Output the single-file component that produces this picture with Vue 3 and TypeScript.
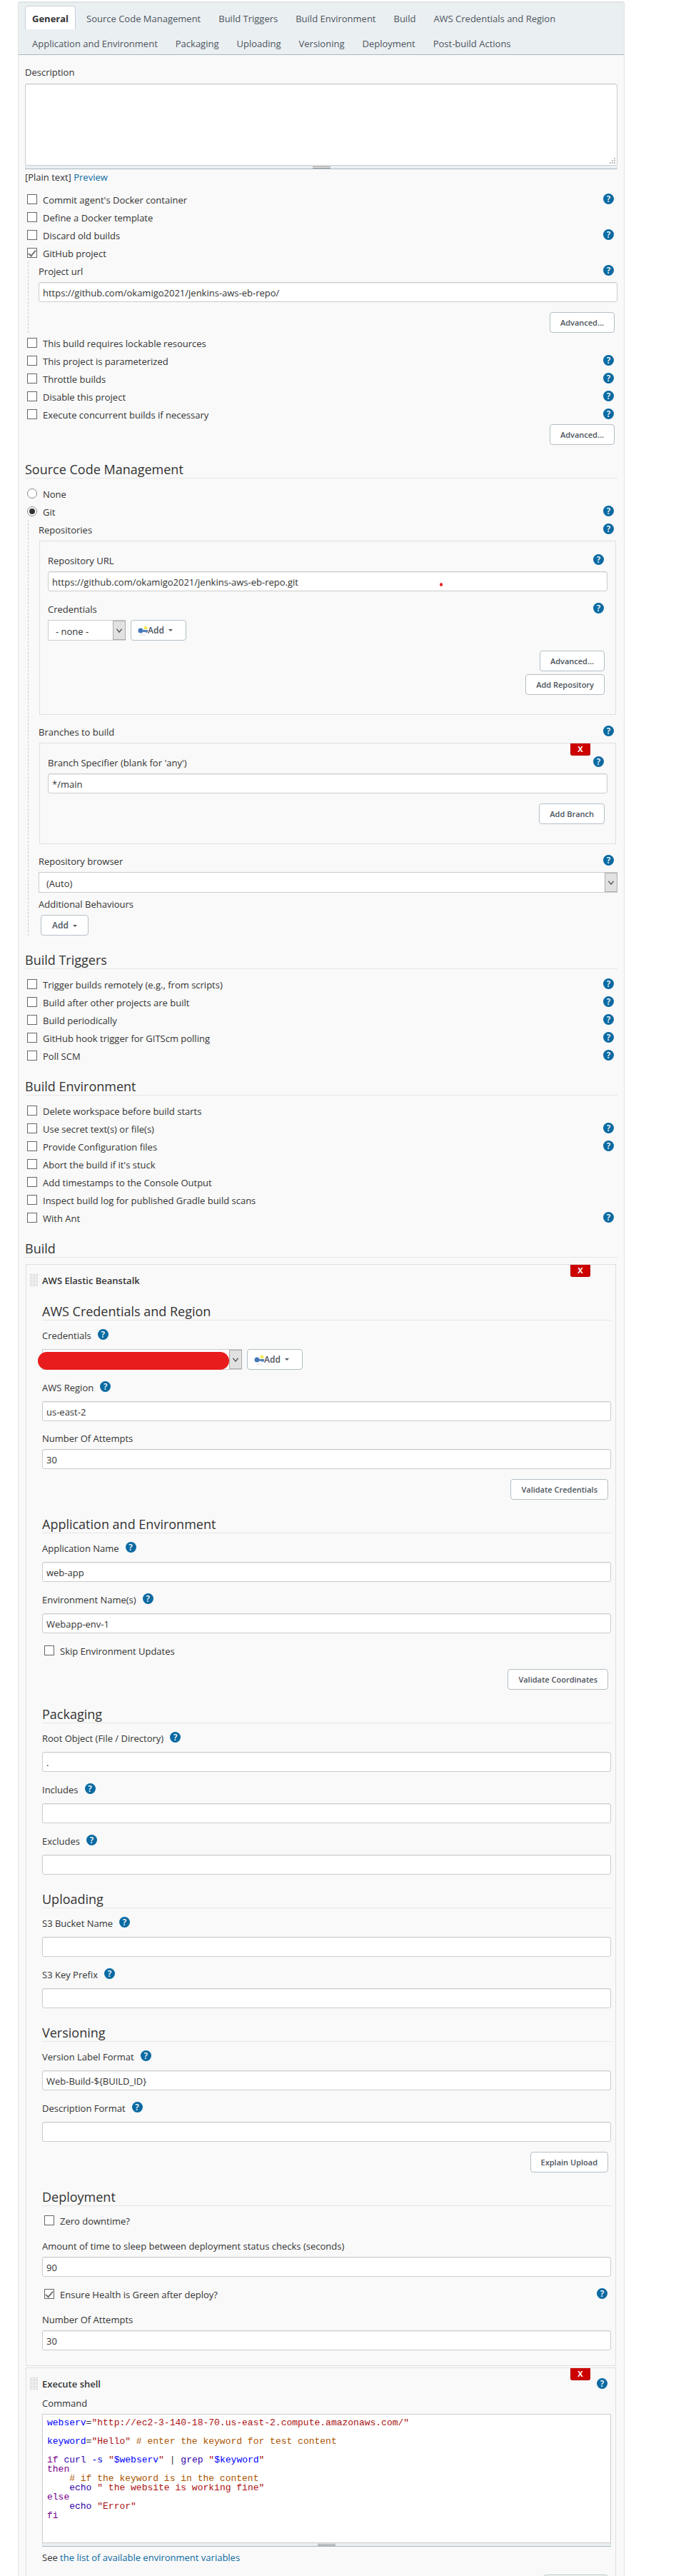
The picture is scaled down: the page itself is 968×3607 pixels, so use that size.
<script setup lang="ts">
import { ref } from 'vue'

interface Check {
  id: string
  label: string
  help?: boolean
  checked?: boolean
}

interface Field {
  kind: 'text' | 'check' | 'button' | 'credentials'
  label: string
  value?: string
  help?: boolean
  checked?: boolean
}

interface Section {
  title: string
  fields: Field[]
}

type Token = [kind: string, text: string]

const tabs: string[] = [
  'General',
  'Source Code Management',
  'Build Triggers',
  'Build Environment',
  'Build',
  'AWS Credentials and Region',
  'Application and Environment',
  'Packaging',
  'Uploading',
  'Versioning',
  'Deployment',
  'Post-build Actions',
]
const activeTab = ref('General')

const generalChecks: Check[] = [
  { id: 'docker-commit', label: "Commit agent's Docker container", help: true },
  { id: 'docker-template', label: 'Define a Docker template' },
  { id: 'discard', label: 'Discard old builds', help: true },
  { id: 'github', label: 'GitHub project', checked: true },
]

const projectChecks: Check[] = [
  { id: 'lockable', label: 'This build requires lockable resources' },
  { id: 'params', label: 'This project is parameterized', help: true },
  { id: 'throttle', label: 'Throttle builds', help: true },
  { id: 'disable', label: 'Disable this project', help: true },
  { id: 'concurrent', label: 'Execute concurrent builds if necessary', help: true },
]

const triggerChecks: Check[] = [
  { id: 'remote', label: 'Trigger builds remotely (e.g., from scripts)', help: true },
  { id: 'after', label: 'Build after other projects are built', help: true },
  { id: 'periodic', label: 'Build periodically', help: true },
  { id: 'hook', label: 'GitHub hook trigger for GITScm polling', help: true },
  { id: 'poll', label: 'Poll SCM', help: true },
]

const environmentChecks: Check[] = [
  { id: 'clean', label: 'Delete workspace before build starts' },
  { id: 'secrets', label: 'Use secret text(s) or file(s)', help: true },
  { id: 'config', label: 'Provide Configuration files', help: true },
  { id: 'stuck', label: "Abort the build if it's stuck" },
  { id: 'timestamps', label: 'Add timestamps to the Console Output' },
  { id: 'gradle', label: 'Inspect build log for published Gradle build scans' },
  { id: 'ant', label: 'With Ant', help: true },
]

const sections: Section[] = [
  {
    title: 'AWS Credentials and Region',
    fields: [
      { kind: 'credentials', label: 'Credentials', help: true },
      { kind: 'text', label: 'AWS Region', value: 'us-east-2', help: true },
      { kind: 'text', label: 'Number Of Attempts', value: '30' },
      { kind: 'button', label: 'Validate Credentials' },
    ],
  },
  {
    title: 'Application and Environment',
    fields: [
      { kind: 'text', label: 'Application Name', value: 'web-app', help: true },
      { kind: 'text', label: 'Environment Name(s)', value: 'Webapp-env-1', help: true },
      { kind: 'check', label: 'Skip Environment Updates' },
      { kind: 'button', label: 'Validate Coordinates' },
    ],
  },
  {
    title: 'Packaging',
    fields: [
      { kind: 'text', label: 'Root Object (File / Directory)', value: '.', help: true },
      { kind: 'text', label: 'Includes', value: '', help: true },
      { kind: 'text', label: 'Excludes', value: '', help: true },
    ],
  },
  {
    title: 'Uploading',
    fields: [
      { kind: 'text', label: 'S3 Bucket Name', value: '', help: true },
      { kind: 'text', label: 'S3 Key Prefix', value: '', help: true },
    ],
  },
  {
    title: 'Versioning',
    fields: [
      { kind: 'text', label: 'Version Label Format', value: 'Web-Build-${BUILD_ID}', help: true },
      { kind: 'text', label: 'Description Format', value: '', help: true },
      { kind: 'button', label: 'Explain Upload' },
    ],
  },
  {
    title: 'Deployment',
    fields: [
      { kind: 'check', label: 'Zero downtime?' },
      { kind: 'text', label: 'Amount of time to sleep between deployment status checks (seconds)', value: '90' },
      { kind: 'check', label: 'Ensure Health is Green after deploy?', checked: true, help: true },
      { kind: 'text', label: 'Number Of Attempts', value: '30' },
    ],
  },
]

const script: Token[][] = [
  [['var', 'webserv'], ['op', '='], ['str', '"http://ec2-3-140-18-70.us-east-2.compute.amazonaws.com/"']],
  [],
  [['var', 'keyword'], ['op', '='], ['str', '"Hello"'], ['op', ' '], ['note', '# enter the keyword for test content']],
  [],
  [['word', 'if'], ['op', ' '], ['cmd', 'curl'], ['op', ' '], ['arg', '-s'], ['op', ' '], ['str', '"'], ['var', '$webserv'], ['str', '"'], ['op', ' | '], ['cmd', 'grep'], ['op', ' '], ['str', '"'], ['var', '$keyword'], ['str', '"']],
  [['word', 'then']],
  [['op', '    '], ['note', '# if the keyword is in the content']],
  [['op', '    '], ['cmd', 'echo'], ['op', ' '], ['str', '" the website is working fine"']],
  [['word', 'else']],
  [['op', '    '], ['cmd', 'echo'], ['op', ' '], ['str', '"Error"']],
  [['word', 'fi']],
]
</script>

<template>
  <main class="page">
    <form class="panel" @submit.prevent>
      <nav class="tabs">
        <button
          v-for="tab in tabs"
          :key="tab"
          type="button"
          class="tab"
          :class="{ active: tab === activeTab }"
          @click="activeTab = tab"
        >{{ tab }}</button>
      </nav>

      <div class="content">
        <label class="description" for="description">Description</label>
        <div class="area">
          <textarea id="description"></textarea>
          <svg class="corner" width="8" height="8" viewBox="0 0 8 8" aria-hidden="true">
            <path d="M6 0h2v2H6zM3 3h2v2H3zM6 3h2v2H6zM0 6h2v2H0zM3 6h2v2H3zM6 6h2v2H6z" fill="#bfbfbf" />
          </svg>
        </div>
        <div class="grip"><span></span></div>
        <p class="format">[Plain text] <a href="#preview">Preview</a></p>

        <div v-for="c in generalChecks" :key="c.id" class="row option">
          <input :id="c.id" type="checkbox" :checked="c.checked" />
          <label :for="c.id">{{ c.label }}</label>
          <button v-if="c.help" type="button" class="help" :aria-label="'Help: ' + c.label">?</button>
        </div>

        <div class="nested">
          <div class="row">
            <label for="project-url">Project url</label>
            <button type="button" class="help" aria-label="Help: Project url">?</button>
          </div>
          <input id="project-url" class="text" type="text" value="https://github.com/okamigo2021/jenkins-aws-eb-repo/" />
          <div class="actions"><button type="button" class="btn">Advanced...</button></div>
        </div>

        <div v-for="c in projectChecks" :key="c.id" class="row option">
          <input :id="c.id" type="checkbox" />
          <label :for="c.id">{{ c.label }}</label>
          <button v-if="c.help" type="button" class="help" :aria-label="'Help: ' + c.label">?</button>
        </div>
        <div class="actions tight"><button type="button" class="btn">Advanced...</button></div>

        <h2>Source Code Management</h2>
        <div class="row option">
          <input id="scm-none" type="radio" name="scm" />
          <label for="scm-none">None</label>
        </div>
        <div class="row option">
          <input id="scm-git" type="radio" name="scm" checked />
          <label for="scm-git">Git</label>
          <button type="button" class="help" aria-label="Help: Git">?</button>
        </div>

        <div class="nested last">
          <div class="row">
            <span class="caption">Repositories</span>
            <button type="button" class="help" aria-label="Help: Repositories">?</button>
          </div>
          <section class="frame">
            <div class="row">
              <label for="repo-url">Repository URL</label>
              <button type="button" class="help" aria-label="Help: Repository URL">?</button>
            </div>
            <div class="marked">
              <input id="repo-url" class="text" type="text" value="https://github.com/okamigo2021/jenkins-aws-eb-repo.git" />
              <span class="dot"></span>
            </div>
            <div class="row spaced">
              <label for="repo-cred">Credentials</label>
              <button type="button" class="help" aria-label="Help: Credentials">?</button>
            </div>
            <div class="picker">
              <span class="select small">
                <select id="repo-cred"><option>- none -</option></select>
                <svg viewBox="0 0 18 26" aria-hidden="true"><path d="M5 11l4 5 4-5" fill="none" stroke="#555" stroke-width="1.5" /></svg>
              </span>
              <button type="button" class="btn add">
                <svg width="14" height="14" viewBox="0 0 14 14" aria-hidden="true">
                  <ellipse cx="7" cy="13" rx="5" ry="1" fill="#ececec" /><circle cx="4" cy="7" r="3.5" fill="#4477b8" /><path d="M6 6h8v3h-1v1h-2V9H6z" fill="#5585bf" /><circle cx="11" cy="3" r="2.5" fill="#f3ea5c" />
                </svg>Add<i class="caret"></i>
              </button>
            </div>
            <div class="actions stack">
              <button type="button" class="btn">Advanced...</button>
              <button type="button" class="btn">Add Repository</button>
            </div>
          </section>

          <div class="row follow">
            <span class="caption">Branches to build</span>
            <button type="button" class="help" aria-label="Help: Branches to build">?</button>
          </div>
          <section class="frame">
            <button type="button" class="remove" aria-label="Delete branch">X</button>
            <div class="row">
              <label for="branch">Branch Specifier (blank for 'any')</label>
              <button type="button" class="help" aria-label="Help: Branch Specifier">?</button>
            </div>
            <input id="branch" class="text" type="text" value="*/main" />
            <div class="actions"><button type="button" class="btn">Add Branch</button></div>
          </section>

          <div class="row follow">
            <label for="browser">Repository browser</label>
            <button type="button" class="help" aria-label="Help: Repository browser">?</button>
          </div>
          <span class="select wide">
            <select id="browser"><option>(Auto)</option></select>
            <svg viewBox="0 0 18 26" aria-hidden="true"><path d="M5 11l4 5 4-5" fill="none" stroke="#555" stroke-width="1.5" /></svg>
          </span>
          <div class="row behaviours"><span class="caption">Additional Behaviours</span></div>
          <button type="button" class="btn more">Add<i class="caret"></i></button>
        </div>

        <h2>Build Triggers</h2>
        <div v-for="c in triggerChecks" :key="c.id" class="row option">
          <input :id="c.id" type="checkbox" />
          <label :for="c.id">{{ c.label }}</label>
          <button v-if="c.help" type="button" class="help" :aria-label="'Help: ' + c.label">?</button>
        </div>

        <h2>Build Environment</h2>
        <div v-for="c in environmentChecks" :key="c.id" class="row option">
          <input :id="c.id" type="checkbox" />
          <label :for="c.id">{{ c.label }}</label>
          <button v-if="c.help" type="button" class="help" :aria-label="'Help: ' + c.label">?</button>
        </div>

        <h2>Build</h2>
        <section class="step">
          <button type="button" class="remove" aria-label="Delete AWS Elastic Beanstalk">X</button>
          <header class="step-title"><span class="handle"></span><b>AWS Elastic Beanstalk</b></header>
          <div class="step-body">
            <template v-for="(section, s) in sections" :key="section.title">
              <h3>{{ section.title }}</h3>
              <template v-for="(f, i) in section.fields" :key="f.label">
                <div v-if="f.kind === 'button'" class="actions">
                  <button type="button" class="btn">{{ f.label }}</button>
                </div>
                <div v-else-if="f.kind === 'check'" class="field row option">
                  <input :id="`f-${s}-${i}`" type="checkbox" :checked="f.checked" />
                  <label :for="`f-${s}-${i}`">{{ f.label }}</label>
                  <button v-if="f.help" type="button" class="help" :aria-label="'Help: ' + f.label">?</button>
                </div>
                <div v-else class="field" :class="{ helped: f.help }">
                  <div class="row beside">
                    <label :for="`f-${s}-${i}`">{{ f.label }}</label>
                    <button v-if="f.help" type="button" class="help" :aria-label="'Help: ' + f.label">?</button>
                  </div>
                  <div v-if="f.kind === 'credentials'" class="picker">
                    <span class="select redacted">
                      <select :id="`f-${s}-${i}`"><option></option></select>
                      <svg viewBox="0 0 18 26" aria-hidden="true"><path d="M5 11l4 5 4-5" fill="none" stroke="#555" stroke-width="1.5" /></svg>
                      <span class="mask"></span>
                    </span>
                    <button type="button" class="btn add">
                      <svg width="14" height="14" viewBox="0 0 14 14" aria-hidden="true">
                        <ellipse cx="7" cy="13" rx="5" ry="1" fill="#ececec" /><circle cx="4" cy="7" r="3.5" fill="#4477b8" /><path d="M6 6h8v3h-1v1h-2V9H6z" fill="#5585bf" /><circle cx="11" cy="3" r="2.5" fill="#f3ea5c" />
                      </svg>Add<i class="caret"></i>
                    </button>
                  </div>
                  <input v-else :id="`f-${s}-${i}`" class="text" type="text" :value="f.value" />
                </div>
              </template>
            </template>
          </div>
        </section>

        <section class="step shell">
          <button type="button" class="remove" aria-label="Delete Execute shell">X</button>
          <header class="step-title">
            <span class="handle"></span><b>Execute shell</b>
            <button type="button" class="help" aria-label="Help: Execute shell">?</button>
          </header>
          <div class="step-body">
            <div class="row command"><span class="caption">Command</span></div>
            <pre class="code"><code><span v-for="(line, n) in script" :key="n" class="line"><span v-for="(t, k) in line" :key="k" :class="t[0]">{{ t[1] }}</span></span></code></pre>
            <div class="grip"><span></span></div>
            <p class="see">See <a href="#env">the list of available environment variables</a></p>
            <div class="actions"><button type="button" class="btn">Advanced...</button></div>
          </div>
        </section>
      </div>
    </form>
  </main>
</template>

<style>
html,
body {
  margin: 0;
  background: #fff;
}
</style>

<style scoped>
* {
  box-sizing: border-box;
}
.page {
  height: 100vh;
  overflow-y: auto;
  scrollbar-width: none;
  padding: 2px 93px 0 25px;
  font-family: 'Open Sans', 'Noto Sans', sans-serif;
  font-size: 13px;
  line-height: 20px;
  color: #333;
}
.panel {
  border: 1px solid #dfe3e5;
  border-top: 2px solid #dfe5e7;
  border-radius: 3px 3px 0 0;
  background: #f9f9f9;
}
button,
input,
select,
textarea {
  font: inherit;
  color: inherit;
  margin: 0;
}
a {
  color: #0b6aa2;
  text-decoration: none;
}
.tabs {
  display: flex;
  flex-wrap: wrap;
  gap: 2px 5px;
  padding: 4px 9px 0;
  background: #eaeff2;
  border-bottom: 1px solid #a9b9c3;
}
.tab {
  height: 33px;
  padding: 2px 9px 0;
  border: 1px solid transparent;
  border-bottom: 0;
  border-radius: 5px 5px 0 0;
  background: none;
  color: #4d545d;
}
.tab.active {
  background: #fff;
  border-color: #c3cfd6;
  color: #333;
  font-weight: 700;
}
.content {
  padding: 14px 9px 24px;
}
.description {
  display: block;
  margin-bottom: 6px;
}
.area {
  position: relative;
  display: flex;
}
textarea {
  flex: 1;
  height: 115px;
  resize: none;
  border: 1px solid #ccc;
  border-radius: 3px;
  background: #fff;
  box-shadow: inset 0 1px 1px #eee;
}
.corner {
  position: absolute;
  right: 3px;
  bottom: 3px;
}
.grip {
  height: 5px;
  display: flex;
  justify-content: center;
  align-items: center;
  background: #eaeff2;
  border: 1px solid #d5dde2;
  border-top: 0;
  border-bottom-color: #a9b9c3;
}
.grip span {
  width: 25px;
  height: 3px;
  border: solid #999;
  border-width: 1px 0;
}
.format {
  margin: 1px 0 8px;
}
.row {
  height: 25px;
  display: flex;
  align-items: center;
  padding-right: 5px;
}
.row label,
.caption {
  padding-top: 3px;
}
.option {
  padding-left: 3px;
  gap: 8px;
}
.help {
  flex: none;
  width: 15px;
  height: 15px;
  margin-left: auto;
  padding: 0;
  border: 0;
  border-radius: 50%;
  background: #0b6aa2;
  color: #fff;
  font-size: 12px;
  line-height: 15px;
  font-weight: 600;
  text-align: center;
}
input[type='checkbox'],
input[type='radio'] {
  appearance: none;
  flex: none;
  width: 14px;
  height: 14px;
  border: 1px solid #666;
  background: #fff;
  display: grid;
  place-items: center;
}
input[type='radio'] {
  border-color: #888;
  border-radius: 50%;
}
input[type='radio']:checked::before {
  content: '';
  width: 8px;
  height: 8px;
  border-radius: 50%;
  background: #333;
}
input[type='checkbox']:checked::before {
  content: '';
  width: 4px;
  height: 9px;
  margin-bottom: 2px;
  border: solid #777;
  border-width: 0 2px 2px 0;
  transform: rotate(40deg);
}
.text {
  display: block;
  width: 100%;
  height: 28px;
  padding: 2px 5px 0;
  border: 1px solid #ccc;
  border-radius: 3px;
  background: #fff;
  box-shadow: inset 0 1px 1px #eee;
}
.row + .text,
.row + .marked,
.row + .picker,
.row + .select {
  margin-top: 4px;
}
.marked {
  position: relative;
}
.dot {
  position: absolute;
  left: 70%;
  bottom: 7px;
  width: 4px;
  height: 5px;
  border-radius: 50%;
  background: #e81c1c;
}
.nested {
  margin-left: 4px;
  padding-left: 14px;
  border-left: 1px dashed #ccc;
}
.nested.last,
.actions.tight {
  margin-bottom: 22px;
}
.actions {
  display: flex;
  justify-content: flex-end;
  margin: 14px 4px 1px 0;
}
.actions.tight {
  margin-top: 2px;
}
.actions.stack {
  flex-direction: column;
  align-items: flex-end;
  gap: 4px;
}
.btn {
  height: 29px;
  padding: 0 14px;
  border: 1px solid #b4bfc7;
  border-radius: 4px;
  background: #fff;
  color: #4d545d;
  font-size: 11px;
  font-weight: 600;
  white-space: nowrap;
}
.btn.add {
  display: flex;
  align-items: center;
  padding: 0 18px 0 9px;
  font-size: 12px;
}
.btn.more {
  display: block;
  margin: 4px 0 0 3px;
  padding: 0 15px;
  font-size: 12px;
}
.caret {
  display: inline-block;
  margin-left: 6px;
  border: solid transparent;
  border-width: 3px 3px 0;
  border-top-color: #4d545d;
  vertical-align: middle;
}
h2,
h3 {
  margin: 19px 0 8px;
  border-bottom: 1px solid #e6e6e6;
  font-size: 18px;
  line-height: 24px;
  font-weight: 500;
}
h3 {
  margin: 22px 0 7px;
}
.frame,
.step {
  position: relative;
  margin: 4px 2px 0 1px;
  border: 1px solid #e0e0e0;
}
.frame {
  padding: 13px 11px 26px;
}
.spaced {
  margin-top: 11px;
}
.follow {
  margin-top: 10px;
}
.behaviours {
  margin-top: 2px;
}
.picker {
  display: flex;
  align-items: center;
  gap: 7px;
}
.select {
  position: relative;
  display: flex;
  height: 29px;
}
.select select {
  appearance: none;
  flex: 1;
  height: 29px;
  padding: 2px 28px 0 10px;
  border: 1px solid #ccc;
  border-radius: 0;
  background: #fff;
}
.select svg {
  position: absolute;
  top: 1px;
  right: 0;
  width: 18px;
  height: 27px;
  border: 1px solid #adadad;
  background: #e1e1e1;
  pointer-events: none;
}
.select.small {
  width: 109px;
}
.select.redacted {
  width: 280px;
}
.mask {
  position: absolute;
  inset: 4px 18px 0 -6px;
  border-radius: 13px;
  background: #e81c1c;
}
.remove {
  position: absolute;
  top: 0;
  right: 35px;
  width: 28px;
  height: 17px;
  padding: 0;
  border: 1px solid #b80000;
  border-top: 0;
  border-radius: 0 0 3px 3px;
  background: #c00;
  color: #fff;
  font-size: 11px;
  line-height: 16px;
  font-weight: 700;
}
.step {
  margin-top: 9px;
  padding: 12px 6px 21px 5px;
}
.step.shell {
  margin-top: 2px;
}
.step-title {
  display: flex;
  align-items: center;
  gap: 6px;
  height: 19px;
  padding-right: 5px;
}
.step-title b {
  font-weight: 600;
}
.handle {
  width: 11px;
  height: 18px;
  background: repeating-linear-gradient(90deg, transparent 0 1px, #f9f9f9 1px 2px), repeating-linear-gradient(#bbb 0 1px, #f9f9f9 1px 2px);
}
.step-body {
  padding-left: 17px;
}
.field {
  margin-top: 10px;
}
.field.helped,
.field.option {
  margin-top: 11px;
}
h3 + .field.helped,
h3 + .field.option {
  margin-top: 0;
}
.helped .text,
.helped .picker {
  margin-top: 8px;
}
.beside {
  gap: 9px;
}
.beside .help {
  margin-left: 0;
}
.command {
  margin-top: 4px;
}
.code {
  height: 181px;
  margin: 4px 0 0;
  padding: 5px 6px;
  border: 1px solid #ccc;
  background: #fff;
  font-family: 'Liberation Mono', 'DejaVu Sans Mono', monospace;
  font-size: 13px;
  line-height: 13px;
  overflow: hidden;
}
.code code {
  font: inherit;
}
.line {
  display: block;
  min-height: 13px;
}
.var {
  color: #00f;
}
.str {
  color: #a11;
}
.note {
  color: #a50;
}
.word {
  color: #708;
}
.cmd {
  color: #30a;
}
.arg {
  color: #00c;
}
.see {
  margin: 5px 0 0;
}
</style>
